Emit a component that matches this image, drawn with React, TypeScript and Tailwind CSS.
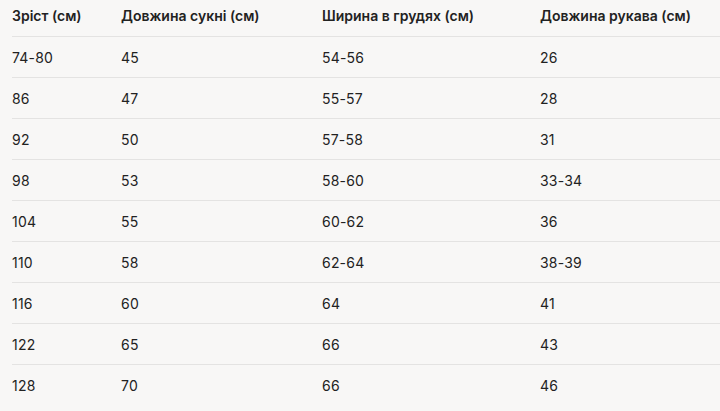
import React from 'react';

type SizeRow = {
  height: string;
  dress: string;
  chest: string;
  sleeve: string;
};

const headers = ['Зріст (см)', 'Довжина сукні (см)', 'Ширина в грудях (см)', 'Довжина рукава (см)'];

const rows: SizeRow[] = [
  { height: '74-80', dress: '45', chest: '54-56', sleeve: '26' },
  { height: '86', dress: '47', chest: '55-57', sleeve: '28' },
  { height: '92', dress: '50', chest: '57-58', sleeve: '31' },
  { height: '98', dress: '53', chest: '58-60', sleeve: '33-34' },
  { height: '104', dress: '55', chest: '60-62', sleeve: '36' },
  { height: '110', dress: '58', chest: '62-64', sleeve: '38-39' },
  { height: '116', dress: '60', chest: '64', sleeve: '41' },
  { height: '122', dress: '65', chest: '66', sleeve: '43' },
  { height: '128', dress: '70', chest: '66', sleeve: '46' },
];

const cols = 'grid grid-cols-[109px_201px_218px_1fr]';

export default function App() {
  return (
    <div
      className="h-[411px] w-[720px] overflow-hidden bg-[#f8f7f6] pl-3 text-[14px] text-[#222222]"
      style={{ fontFamily: 'Inter, "Noto Sans", sans-serif' }}
    >
      <div className={`${cols} h-9 items-center pb-1.5 font-semibold`}>
        {headers.map((h) => (
          <div key={h}>{h}</div>
        ))}
      </div>
      {rows.map((r) => (
        <div key={r.height} className={`${cols} h-[41px] items-center border-t border-[#e4e3e2] tracking-[0.2px]`}>
          <div>{r.height}</div>
          <div>{r.dress}</div>
          <div>{r.chest}</div>
          <div>{r.sleeve}</div>
        </div>
      ))}
    </div>
  );
}
